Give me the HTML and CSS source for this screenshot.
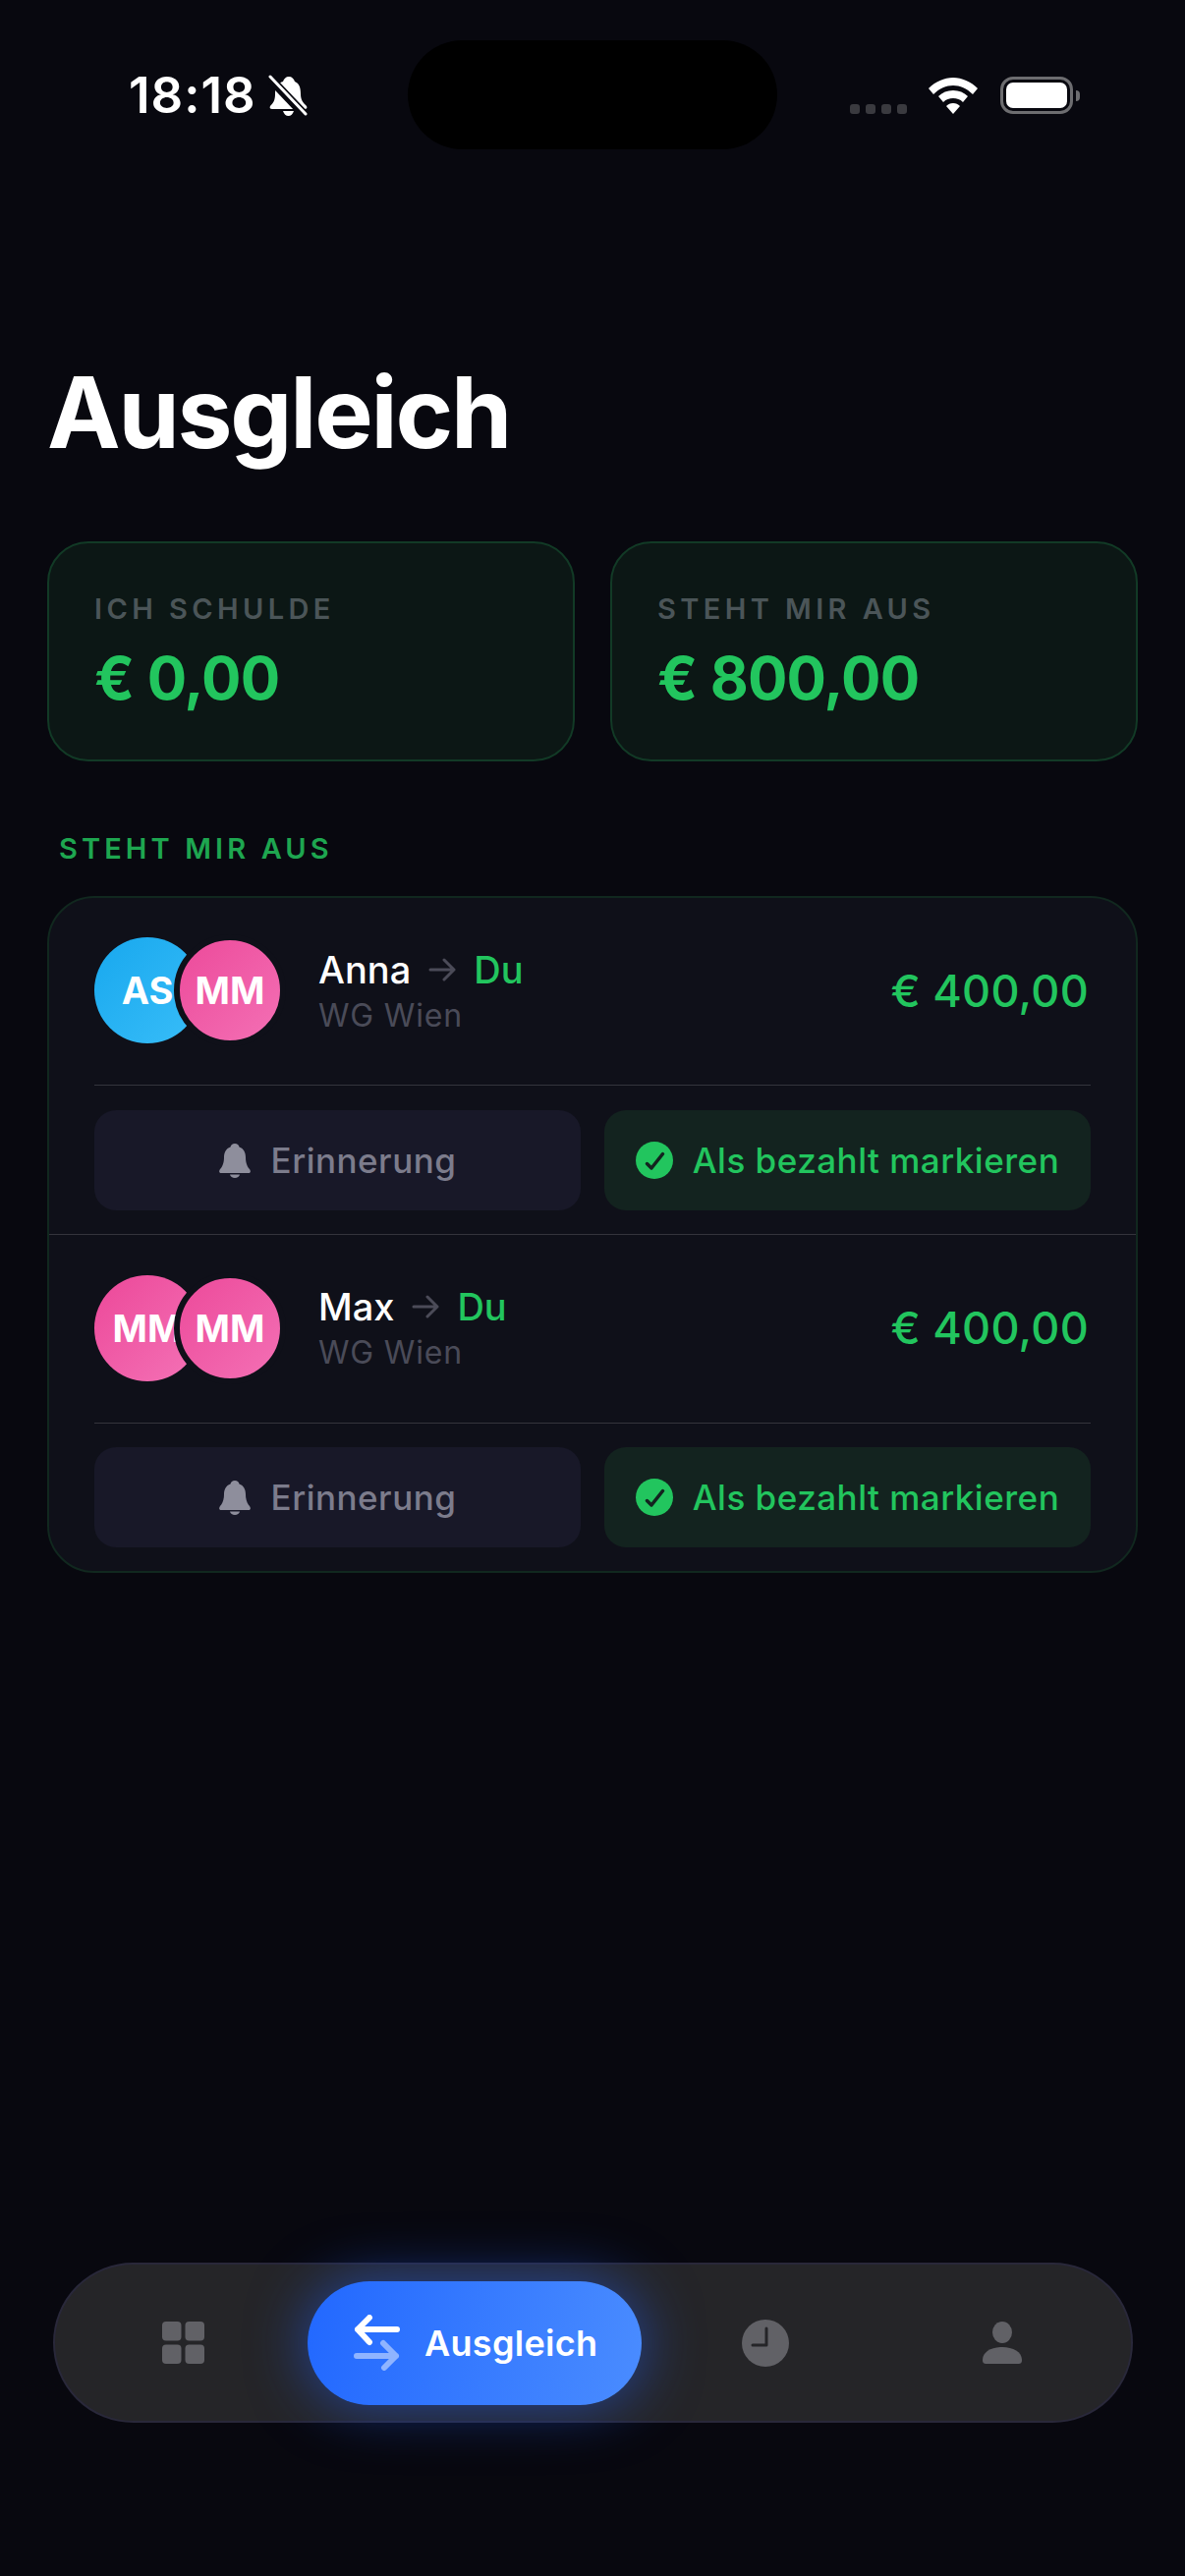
FILE: index.html
```html
<!DOCTYPE html>
<html lang="de">
<head>
    <meta charset="UTF-8">
    <meta name="viewport" content="width=device-width, initial-scale=1.0">
    <title>Ausgleich</title>
    <link rel="stylesheet" href="styles.css">
</head>
<body>
    <!-- Status Bar -->
    <header class="status-bar">
        <div class="status-left">
            <span class="clock">18:18</span>
            <svg class="mute-icon" viewBox="0 0 40 42" fill="#fff">
                <path d="M21 2c3 0 5 2 6 5 5 2 6 7 6 13 0 6 3 9 6 12 1 2 0 3-2 3H4c-2 0-3-1-2-3 3-3 5-6 5-12 0-7 2-11 8-13 1-3 3-5 6-5z"/>
                <path d="M15 37h11c-1 3-3 5-5.500 5s-4.500-2-5.500-5z"/>
                <path d="M1 3L37 41" stroke="#08080f" stroke-width="9"/>
                <path d="M2 2L38 40" stroke="#fff" stroke-width="3" stroke-linecap="round"/>
            </svg>
        </div>
        <div class="island"></div>
        <div class="status-right">
            <div class="signal"><i></i><i></i><i></i><i></i></div>
            <svg class="wifi-icon" viewBox="0 0 50 37" fill="#fff">
                <path d="M25 0c9 0 18 4 25 11l-5 6C39 11 32 8 25 8S11 11 5 17L0 11C7 4 16 0 25 0z"/>
                <path d="M25 13c6 0 11 2 15 6l-5 6c-3-3-6-4-10-4s-7 1-10 4l-5-6c4-4 9-6 15-6z"/>
                <path d="M25 26c3 0 5 1 7 3l-7 8-7-8c2-2 4-3 7-3z"/>
            </svg>
            <div class="battery"><div class="battery-fill"></div></div>
            <div class="battery-cap"></div>
        </div>
    </header>

    <h1 class="page-title">Ausgleich</h1>

    <!-- Summary Cards -->
    <section class="summary">
        <div class="summary-card">
            <p class="summary-label">ICH SCHULDE</p>
            <p class="summary-value">€ 0,00</p>
        </div>
        <div class="summary-card">
            <p class="summary-label">STEHT MIR AUS</p>
            <p class="summary-value">€ 800,00</p>
        </div>
    </section>

    <h2 class="section-title">STEHT MIR AUS</h2>

    <section class="list">
        <div class="entry">
            <div class="entry-main">
                <div class="avatars">
                    <div class="avatar avatar-blue">AS</div>
                    <div class="avatar avatar-pink avatar-top">MM</div>
                </div>
                <div class="entry-info">
                    <p class="entry-names">
                        Anna
                        <svg class="arrow-icon" viewBox="0 0 28 24" fill="none" stroke="#4b4b58" stroke-width="3" stroke-linecap="round" stroke-linejoin="round"><path d="M2 12h24M16 2l10 10-10 10"/></svg>
                        <span class="green">Du</span>
                    </p>
                    <p class="entry-group">WG Wien</p>
                </div>
                <p class="entry-amount">€ 400,00</p>
            </div>
            <div class="entry-actions">
                <button class="btn btn-remind">
                    <svg class="bell-icon" viewBox="0 0 32 35" fill="#8e8e9c"><path d="M16 0c2.500 0 4 1.500 4.500 3.500C25 5 27 9 27 14c0 6 2 10 4 12 1.500 2 1 4-1 4H2c-2 0-2.500-2-1-4 2-2 4-6 4-12 0-5 2-9 6.500-10.500C12 1.500 13.500 0 16 0z"/><path d="M11 31.500h10c-.5 2-2.500 3.500-5 3.500s-4.500-1.500-5-3.500z"/></svg>
                    Erinnerung
                </button>
                <button class="btn btn-paid">
                    <svg class="check-icon" viewBox="0 0 38 38"><circle cx="19" cy="19" r="19" fill="#22c55e"/><path d="M11.500 22.500l4.500 4.500 11.500-14.500" fill="none" stroke="#13231f" stroke-width="3.500" stroke-linecap="round" stroke-linejoin="round"/></svg>
                    Als bezahlt markieren
                </button>
            </div>
        </div>
        <div class="entry">
            <div class="entry-main">
                <div class="avatars">
                    <div class="avatar avatar-pink">MM</div>
                    <div class="avatar avatar-pink avatar-top">MM</div>
                </div>
                <div class="entry-info">
                    <p class="entry-names">
                        Max
                        <svg class="arrow-icon" viewBox="0 0 28 24" fill="none" stroke="#4b4b58" stroke-width="3" stroke-linecap="round" stroke-linejoin="round"><path d="M2 12h24M16 2l10 10-10 10"/></svg>
                        <span class="green">Du</span>
                    </p>
                    <p class="entry-group">WG Wien</p>
                </div>
                <p class="entry-amount">€ 400,00</p>
            </div>
            <div class="entry-actions">
                <button class="btn btn-remind">
                    <svg class="bell-icon" viewBox="0 0 32 35" fill="#8e8e9c"><path d="M16 0c2.500 0 4 1.500 4.500 3.500C25 5 27 9 27 14c0 6 2 10 4 12 1.500 2 1 4-1 4H2c-2 0-2.500-2-1-4 2-2 4-6 4-12 0-5 2-9 6.500-10.500C12 1.500 13.500 0 16 0z"/><path d="M11 31.500h10c-.5 2-2.500 3.500-5 3.500s-4.500-1.500-5-3.500z"/></svg>
                    Erinnerung
                </button>
                <button class="btn btn-paid">
                    <svg class="check-icon" viewBox="0 0 38 38"><circle cx="19" cy="19" r="19" fill="#22c55e"/><path d="M11.500 22.500l4.500 4.500 11.500-14.500" fill="none" stroke="#13231f" stroke-width="3.500" stroke-linecap="round" stroke-linejoin="round"/></svg>
                    Als bezahlt markieren
                </button>
            </div>
        </div>
    </section>

    <!-- Bottom Nav -->
    <nav class="tabbar">
        <div class="tab tab-grid">
            <svg class="tab-icon" viewBox="0 0 43 43" fill="#616166">
                <rect width="19.500" height="19.500" rx="4"/><rect x="23.500" width="19.500" height="19.500" rx="4"/>
                <rect y="23.500" width="19.500" height="19.500" rx="4"/><rect x="23.500" y="23.500" width="19.500" height="19.500" rx="4"/>
            </svg>
        </div>
        <div class="tab-active">
            <svg class="swap-icon" viewBox="0 0 47 57" fill="none" stroke-width="6" stroke-linecap="round" stroke-linejoin="round">
                <path d="M44 15H4M16 3L4 15l12 13" stroke="#fff"/>
                <path d="M3 42h40M30 29l13 13-12 12" stroke="#8fb4ff"/>
            </svg>
            <span>Ausgleich</span>
        </div>
        <div class="tab tab-clock">
            <svg class="tab-icon clock-icon" viewBox="0 0 48 48">
                <circle cx="24" cy="24" r="24" fill="#616166"/>
                <path d="M25 9v17H11" fill="none" stroke="#252528" stroke-width="3" stroke-linecap="round" stroke-linejoin="round"/>
            </svg>
        </div>
        <div class="tab tab-user">
            <svg class="tab-icon user-icon" viewBox="0 0 40 43" fill="#616166">
                <ellipse cx="20" cy="11" rx="10" ry="11"/>
                <path d="M0 39c0-8 9-13 20-13s20 5 20 13c0 3-1 4-4 4H4c-3 0-4-1-4-4z"/>
            </svg>
        </div>
    </nav>
</body>
</html>
```

FILE: styles.css
```css
* { box-sizing: border-box; }

html, body { height: 100%; }

body {
    position: relative;
    margin: 0;
    padding: 0 48px;
    background-color: #08080f;
    color: #fff;
    font-family: Inter, "Noto Sans", sans-serif;
    overflow: hidden;
}

p, h1, h2 { margin: 0; }

/* Status Bar */
.status-bar {
    display: flex;
    align-items: flex-start;
    height: 152px;
    margin: 0 -48px;
    padding-top: 41px;
}
.status-left {
    display: flex;
    align-items: center;
    gap: 12px;
    width: 415px;
    height: 44px;
    margin-top: 34px;
    padding-left: 131px;
}
.clock {
    font-size: 51px;
    font-weight: 600;
    letter-spacing: 1px;
    line-height: 44px;
}
.mute-icon { width: 40px; height: 42px; }
.island {
    width: 376px;
    height: 111px;
    border-radius: 56px;
    background-color: #000;
}
.status-right {
    display: flex;
    align-items: flex-end;
    height: 38px;
    margin-top: 37px;
    margin-left: 74px;
}
.signal { display: flex; gap: 6px; margin-bottom: 0; }
.signal i {
    display: block;
    width: 10px;
    height: 10px;
    border-radius: 3px;
    background-color: #3a3a3f;
}
.wifi-icon { width: 50px; height: 37px; margin-left: 22px; }
.battery {
    width: 74px;
    height: 38px;
    margin-left: 23px;
    padding: 3px;
    border: 3px solid #6d6d70;
    border-radius: 13px;
}
.battery-fill {
    height: 100%;
    border-radius: 7px;
    background-color: #fff;
}
.battery-cap {
    width: 4px;
    height: 11px;
    margin: 0 0 13px 3px;
    border-radius: 0 4px 4px 0;
    background-color: #6d6d70;
}

.page-title {
    margin-top: 208px;
    font-size: 100px;
    font-weight: 700;
    letter-spacing: -2.200px;
    line-height: 120px;
}

/* Summary Cards */
.summary {
    display: flex;
    gap: 36px;
    margin-top: 71px;
}
.summary-card {
    flex: 1;
    height: 224px;
    padding: 50px 46px 0;
    border: 2px solid #123a26;
    border-radius: 42px;
    background-color: #0c1715;
}
.summary-label {
    color: #4b5558;
    font-size: 29px;
    font-weight: 600;
    letter-spacing: 4.400px;
    line-height: 34px;
}
.summary-value {
    margin-top: 17px;
    color: #22c55e;
    font-size: 60px;
    font-weight: 700;
    letter-spacing: -0.800px;
    line-height: 72px;
}

.section-title {
    margin: 72px 0 0 12px;
    color: #1ea650;
    font-size: 29px;
    font-weight: 600;
    letter-spacing: 4.100px;
    line-height: 34px;
}

/* Settlement list */
.list {
    margin-top: 31px;
    border: 2px solid #11281f;
    border-radius: 48px;
    background-color: #0f1019;
}
.entry { padding: 0 46px; height: 342px; }
.entry + .entry {
    height: 343px;
    border-top: 1px solid #34343c;
}
.entry-main {
    display: flex;
    align-items: center;
    height: 191px;
    border-bottom: 1px solid #34343c;
    padding-bottom: 2px;
}
.entry + .entry .entry-main { height: 192px; }
.entry + .entry .entry-actions { padding-top: 24px; }
.avatars {
    display: flex;
    align-items: center;
    width: 228px;
    flex-shrink: 0;
}
.avatar {
    display: flex;
    align-items: center;
    justify-content: center;
    width: 108px;
    height: 108px;
    flex-shrink: 0;
    border-radius: 50%;
    font-size: 38px;
    font-weight: 700;
    overflow: hidden;
    white-space: nowrap;
}
.avatar-blue { background: linear-gradient(135deg, #18a8ee, #38bdf8); }
.avatar-pink { background: linear-gradient(135deg, #ec4899, #f472b6); }
.avatar-top {
    position: relative;
    width: 114px;
    height: 114px;
    margin-left: -27px;
    border: 6px solid #0f1019;
    background-origin: border-box;
}
.entry-info { flex: 1; }
.entry-names {
    display: flex;
    align-items: center;
    gap: 18px;
    font-size: 38px;
    font-weight: 500;
    line-height: 46px;
}
.arrow-icon { width: 28px; height: 24px; }
.green { color: #22c55e; }
.entry-group {
    margin-top: 5px;
    color: #4a4b58;
    font-size: 32px;
    letter-spacing: 0.800px;
    line-height: 38px;
}
.entry-amount {
    color: #22c55e;
    font-size: 45px;
    font-weight: 500;
    letter-spacing: 0.300px;
    margin-right: 2px;
}
.entry-actions {
    display: flex;
    gap: 24px;
    padding-top: 25px;
}
.btn {
    display: flex;
    flex: 1;
    align-items: center;
    justify-content: center;
    height: 102px;
    border: none;
    border-radius: 22px;
    font-family: inherit;
    font-size: 35px;
    font-weight: 500;
    letter-spacing: 0.500px;
}
.btn-remind {
    gap: 21px;
    background-color: #181828;
    color: #7c7c8c;
}
.btn-paid {
    gap: 20px;
    background-color: #13231f;
    color: #22c55e;
}
.bell-icon { width: 32px; height: 35px; }
.check-icon { width: 38px; height: 38px; }

/* Bottom Nav */
.tabbar {
    position: absolute;
    left: 54px;
    top: 2303px;
    display: flex;
    align-items: center;
    width: 1099px;
    height: 163px;
    border: 2px solid #29283a;
    border-radius: 82px;
    background-color: #252528;
}
.tab {
    display: flex;
    align-items: center;
    justify-content: center;
}
.tab-grid { width: 257px; padding-left: 4px; }
.tab-active {
    display: flex;
    align-items: center;
    gap: 25px;
    width: 340px;
    height: 126px;
    padding-left: 47px;
    border-radius: 63px;
    background: linear-gradient(100deg, #2268ff, #4a8cff);
    box-shadow: 0 0 60px rgba(37, 99, 255, 0.55);
    font-size: 36px;
    font-weight: 600;
    letter-spacing: 0.300px;
}
.tab-clock { width: 252px; }
.tab-user { width: 229px; }
.tab-icon { width: 43px; height: 43px; }
.clock-icon { width: 48px; height: 48px; }
.user-icon { width: 40px; height: 43px; }
.swap-icon { width: 47px; height: 57px; }
```
